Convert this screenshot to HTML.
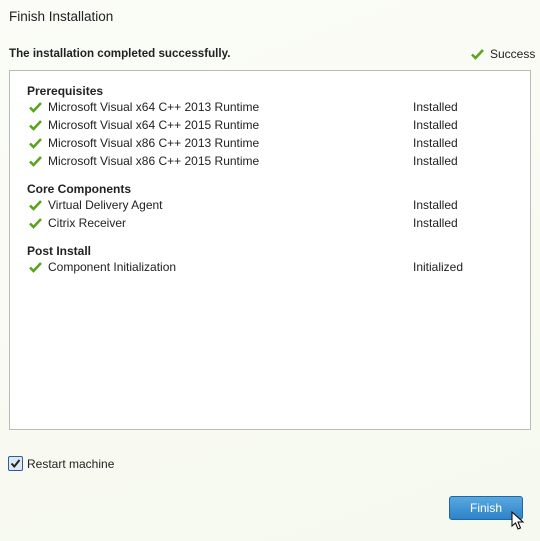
<!DOCTYPE html><html><head><style>
body{margin:0;width:540px;height:541px;overflow:hidden;background:linear-gradient(160deg,#fbfcf7,#f6f9ef);font-family:"Liberation Sans",sans-serif;font-size:12px;color:#222;position:relative}
.a{position:absolute;white-space:nowrap}
.box{position:absolute;left:9px;top:70px;width:520px;height:358px;background:#fff;border:1px solid #b9bcb6}
.ck{position:absolute;width:13px;height:12px}
.h{font-weight:bold}
</style></head><body>
<div class="a" style="left:9px;top:9px;font-size:13.5px">Finish Installation</div>
<div class="a h" style="left:9px;top:47px;font-size:11.6px">The installation completed successfully.</div>
<svg class="ck" style="left:471px;top:48px" viewBox="0 0 13 12"><path d="M1 6.5 L4.5 10 L12 2" stroke="#5aa51e" stroke-width="2.6" fill="none"/></svg>
<div class="a" style="left:490px;top:47px">Success</div>
<div class="box"></div>
<div class="a h" style="left:27px;top:84px">Prerequisites</div>
<div class="a h" style="left:27px;top:182px">Core Components</div>
<div class="a h" style="left:27px;top:244px">Post Install</div>
<div id="rows"></div>
<script>
var r=[[100,"Microsoft Visual x64 C++ 2013 Runtime","Installed"],[118,"Microsoft Visual x64 C++ 2015 Runtime","Installed"],[136,"Microsoft Visual x86 C++ 2013 Runtime","Installed"],[154,"Microsoft Visual x86 C++ 2015 Runtime","Installed"],[198,"Virtual Delivery Agent","Installed"],[216,"Citrix Receiver","Installed"],[260,"Component Initialization","Initialized"]];
var h="";r.forEach(function(x){h+='<svg class="ck" style="left:29px;top:'+(x[0]+1)+'px" viewBox="0 0 13 12"><path d="M1 6.5 L4.5 10 L12 2" stroke="#5aa51e" stroke-width="2.6" fill="none"/></svg><div class="a" style="left:48px;top:'+x[0]+'px">'+x[1]+'</div><div class="a" style="left:413px;top:'+x[0]+'px">'+x[2]+'</div>';});
document.getElementById("rows").innerHTML=h;
</script>
<div class="a" style="left:8px;top:456px;width:13px;height:13px;border:1px solid #2b5f95;border-radius:2px;background:#dce9f5"></div>
<svg class="a" style="left:10px;top:458px" width="11" height="11" viewBox="0 0 11 11"><path d="M1.5 5.5 L4.3 8.5 L9.5 2" stroke="#222" stroke-width="2" fill="none"/></svg>
<div class="a" style="left:27px;top:457px">Restart machine</div>
<div class="a" style="left:449px;top:496px;width:72px;height:22px;border:1px solid #1f67a8;border-radius:3px;background:linear-gradient(#5aa8e0,#2d83c8);color:#fff;text-align:center;line-height:22px">Finish</div>
<svg class="a" style="left:511px;top:511px" width="14" height="20" viewBox="0 0 14 20"><path d="M1 1 L1 15 L4.5 12 L7 18 L9.5 17 L7 11 L12 11 Z" fill="#fff" stroke="#000" stroke-width="1"/></svg>
</body></html>
